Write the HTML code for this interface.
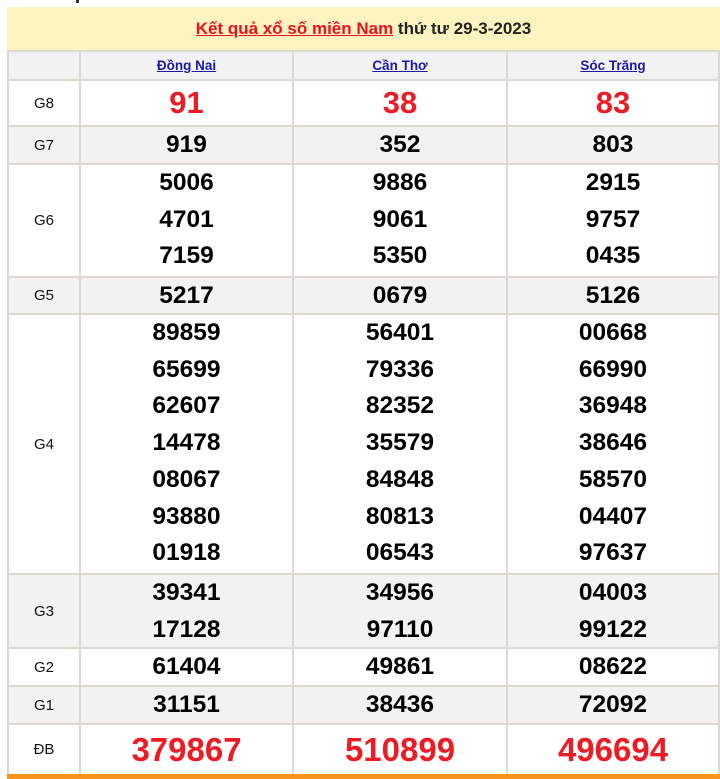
<!DOCTYPE html>
<html><head><meta charset="utf-8"><style>
body{margin:0;width:720px;height:779px;background:#fff;position:relative;overflow:hidden;font-family:"Liberation Sans",Arial,sans-serif}
.hd{position:absolute;left:7px;top:7px;width:713px;height:43px;background:#fdf3c0;text-align:center;line-height:43px;font-size:17px;font-weight:bold;color:#222}
.hd a{color:#e8131b;text-decoration:underline}
.r{position:absolute;left:7px;width:713px;border-top:2px solid #ddd8d0;box-sizing:border-box}
.g{background:#f2f2f2}
.c{position:absolute;top:0;bottom:0;border-left:2px solid #ddd8d0;box-sizing:border-box;text-align:center}
.c.l{left:0;width:72px;border-left:2px solid #ddd8d0;font-size:15px;font-weight:normal;color:#111;display:flex;align-items:center;justify-content:center;line-height:normal}
.c1{left:72px;width:213px}.c2{left:285px;width:214px}.c3{left:499px;width:214px;border-right:2px solid #ddd8d0}
.n{font-weight:bold;font-size:24.5px;color:#000;line-height:36.7px}
.nm a{color:#1a1aa6;font-weight:bold;font-size:13.5px;line-height:27px;text-decoration:underline}
.red{color:#ed1c24;font-weight:bold}
</style></head><body>
<div style="position:absolute;left:76px;top:0;width:3px;height:3px;background:#333"></div>
<div class="hd"><a>Kết quả xổ số miền Nam</a> thứ tư 29-3-2023</div>

<div class="r g nm" style="top:50px;height:29px"><div class="c l"></div><div class="c c1"><a>Đồng Nai</a></div><div class="c c2"><a>Cần Thơ</a></div><div class="c c3"><a>Sóc Trăng</a></div></div>

<div class="r" style="top:79px;height:46px"><div class="c l">G8</div><div class="c c1 red" style="font-size:31px;line-height:44px">91</div><div class="c c2 red" style="font-size:31px;line-height:44px">38</div><div class="c c3 red" style="font-size:31px;line-height:44px">83</div></div>

<div class="r g n" style="top:125px;height:38px"><div class="c l">G7</div><div class="c c1">919</div><div class="c c2">352</div><div class="c c3">803</div></div>

<div class="r n" style="top:163px;height:113px"><div class="c l">G6</div><div class="c c1">5006<br>4701<br>7159</div><div class="c c2">9886<br>9061<br>5350</div><div class="c c3">2915<br>9757<br>0435</div></div>

<div class="r g n" style="top:276px;height:37px"><div class="c l">G5</div><div class="c c1">5217</div><div class="c c2">0679</div><div class="c c3">5126</div></div>

<div class="r n" style="top:313px;height:260px"><div class="c l">G4</div><div class="c c1">89859<br>65699<br>62607<br>14478<br>08067<br>93880<br>01918</div><div class="c c2">56401<br>79336<br>82352<br>35579<br>84848<br>80813<br>06543</div><div class="c c3">00668<br>66990<br>36948<br>38646<br>58570<br>04407<br>97637</div></div>

<div class="r g n" style="top:573px;height:74px"><div class="c l">G3</div><div class="c c1">39341<br>17128</div><div class="c c2">34956<br>97110</div><div class="c c3">04003<br>99122</div></div>

<div class="r n" style="top:647px;height:38px"><div class="c l">G2</div><div class="c c1">61404</div><div class="c c2">49861</div><div class="c c3">08622</div></div>

<div class="r g n" style="top:685px;height:38px"><div class="c l">G1</div><div class="c c1">31151</div><div class="c c2">38436</div><div class="c c3">72092</div></div>

<div class="r" style="top:723px;height:51px"><div class="c l">ĐB</div><div class="c c1 red" style="font-size:33px;line-height:50px">379867</div><div class="c c2 red" style="font-size:33px;line-height:50px">510899</div><div class="c c3 red" style="font-size:33px;line-height:50px">496694</div></div>

<div style="position:absolute;left:7px;top:774px;width:713px;height:5px;background:#f7941d"></div>
</body></html>
